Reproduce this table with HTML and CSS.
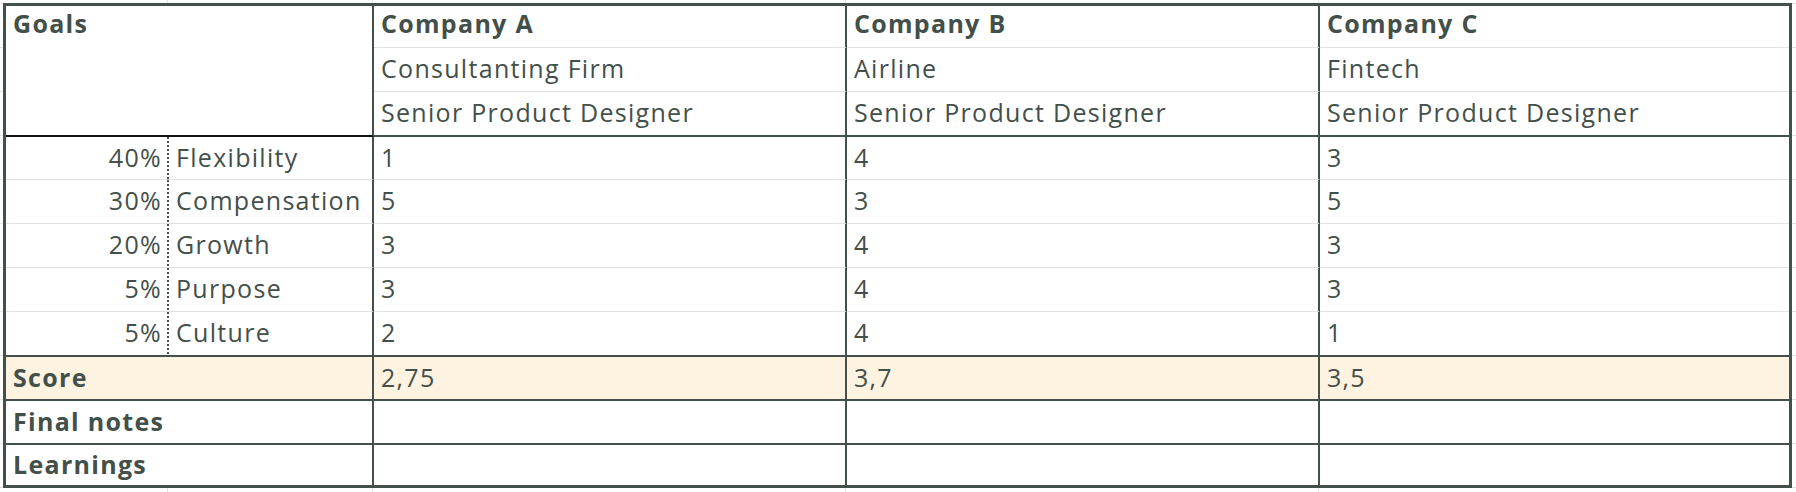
FILE: index.html
```html
<!DOCTYPE html>
<html lang="en">
<head>
<meta charset="utf-8">
<title>Job comparison</title>
<link rel="stylesheet" href="styles.css">
</head>
<body>
<div class="sheet">
  <div class="cell goals bold">Goals</div>
  <div class="cell top vr lt bold">Company A</div>
  <div class="cell top vr lt bold">Company B</div>
  <div class="cell top lt bold">Company C</div>

  <div class="cell vr lt">Consultanting Firm</div>
  <div class="cell vr lt">Airline</div>
  <div class="cell lt">Fintech</div>

  <div class="cell vr dk">Senior Product Designer</div>
  <div class="cell vr dk">Senior Product Designer</div>
  <div class="cell dk">Senior Product Designer</div>

  <div class="cell pct lt">40%</div>
  <div class="cell vr lt">Flexibility</div>
  <div class="cell vr lt">1</div>
  <div class="cell vr lt">4</div>
  <div class="cell lt">3</div>

  <div class="cell pct lt">30%</div>
  <div class="cell vr lt">Compensation</div>
  <div class="cell vr lt">5</div>
  <div class="cell vr lt">3</div>
  <div class="cell lt">5</div>

  <div class="cell pct lt">20%</div>
  <div class="cell vr lt">Growth</div>
  <div class="cell vr lt">3</div>
  <div class="cell vr lt">4</div>
  <div class="cell lt">3</div>

  <div class="cell pct lt">5%</div>
  <div class="cell vr lt">Purpose</div>
  <div class="cell vr lt">3</div>
  <div class="cell vr lt">4</div>
  <div class="cell lt">3</div>

  <div class="cell pct dk">5%</div>
  <div class="cell vr dk">Culture</div>
  <div class="cell vr dk">2</div>
  <div class="cell vr dk">4</div>
  <div class="cell dk">1</div>

  <div class="cell wide vr dk score bold">Score</div>
  <div class="cell vr dk score">2,75</div>
  <div class="cell vr dk score">3,7</div>
  <div class="cell dk score">3,5</div>

  <div class="cell wide vr dk bold">Final notes</div>
  <div class="cell vr dk"></div>
  <div class="cell vr dk"></div>
  <div class="cell dk"></div>

  <div class="cell wide vr bold">Learnings</div>
  <div class="cell vr"></div>
  <div class="cell vr"></div>
  <div class="cell"></div>
</div>
</body>
</html>
```
FILE: styles.css
```css
html {
  margin: 0;
  min-height: 100%;
  background-color: #ffffff;
  background-image:
    linear-gradient(#e3e3e3 1px, transparent 1px),
    linear-gradient(90deg, #e3e3e3 1px, transparent 1px),
    linear-gradient(90deg, #e3e3e3 1px, transparent 1px),
    linear-gradient(90deg, #e3e3e3 1px, transparent 1px),
    linear-gradient(90deg, #e3e3e3 1px, transparent 1px);
  background-repeat: repeat-y, repeat-y, repeat-y, repeat-y, repeat-y;
  background-size: 100% 44px, 1px 100%, 1px 100%, 1px 100%, 1px 100%;
  background-position: 0 3px, 167px 0, 372px 0, 845px 0, 1318px 0;
}

body {
  margin: 0;
  padding: 3px 0 0 3px;
  font-family: "Open Sans", "Noto Sans", sans-serif;
  font-size: 25px;
  letter-spacing: 1.3px;
  color: #434f49;
}

.sheet {
  display: grid;
  width: max-content;
  grid-template-columns: 163px 205px 473px 473px 469px;
  grid-template-rows: 42px 44px 45px 43px 44px 44px 44px 45px 44px 44px 40px;
  border: 3px solid #44514a;
  background: #ffffff;
}

.cell {
  box-sizing: border-box;
  display: flex;
  align-items: center;
  padding: 0 7px 2px;
  white-space: nowrap;
  overflow: hidden;
  line-height: 1;
}

.bold {
  font-weight: 700;
}

.top {
  padding-bottom: 6px;
}

.goals {
  grid-column: span 2;
  grid-row: span 3;
  align-items: flex-start;
  padding-top: 5px;
  border-right: 2px solid #44514a;
  border-bottom: 2px solid #111111;
}

.wide {
  grid-column: span 2;
}

.vr {
  border-right: 2px solid #44514a;
}

.lt {
  border-bottom: 1px solid #e1e1e1;
}

.dk {
  border-bottom: 2px solid #44514a;
}

.pct {
  justify-content: flex-end;
  padding-right: 7px;
  background: linear-gradient(#44514a 50%, transparent 50%) right top / 2px 4px repeat-y;
}

.score {
  background-color: #fef2e1;
}
```
